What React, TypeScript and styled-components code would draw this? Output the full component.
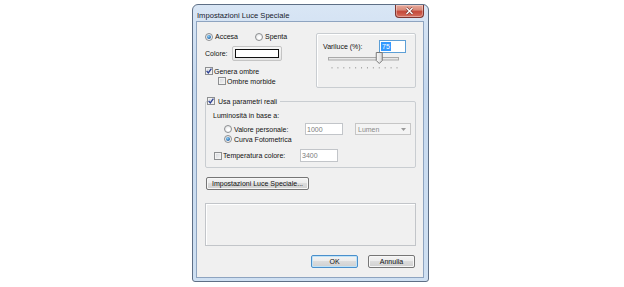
import React from "react";
import styled, { createGlobalStyle } from "styled-components";

const GlobalStyle = createGlobalStyle`
  html, body {
    margin: 0;
    padding: 0;
    background: #ffffff;
  }
  body {
    font-family: "Liberation Sans", Arial, sans-serif;
    font-size: 7px;
    color: #111;
  }
`;

export default function App() {
  return (
    <>
      <GlobalStyle />
      <Page>
        <Window>
          <TitleBar>
            <Title>Impostazioni Luce Speciale</Title>
            <CloseButton>
              <svg width="9" height="8" viewBox="0 0 9 8">
                <path d="M1.5 1 L7.5 7 M7.5 1 L1.5 7" stroke="#7a3a34" strokeWidth="2.6" />
                <path d="M1.5 1 L7.5 7 M7.5 1 L1.5 7" stroke="#ffffff" strokeWidth="1.4" />
              </svg>
            </CloseButton>
          </TitleBar>
          <Client>
            <TopSection>
              <LeftColumn>
                <Row $h={11}>
                  <Option $w={48}>
                    <Radio $checked />
                    <Text>Accesa</Text>
                  </Option>
                  <Option>
                    <Radio />
                    <Text>Spenta</Text>
                  </Option>
                </Row>
                <Row $h={15} $mt={4}>
                  <Text $w={25}>Colore:</Text>
                  <ColorButton>
                    <Swatch />
                  </ColorButton>
                </Row>
                <Row $h={10} $mt={5} $gap={1}>
                  <Check checked />
                  <Text>Genera ombre</Text>
                </Row>
                <Row $h={10} $indent={13} $gap={1}>
                  <Check />
                  <Text>Ombre morbide</Text>
                </Row>
              </LeftColumn>
              <SliderGroup>
                <Row $h={13}>
                  <Text $w={54}>Variluce (%):</Text>
                  <Field $w={27} $h={13} $focused>
                    <Selected>75</Selected>
                  </Field>
                </Row>
                <TrackBar value={75} />
              </SliderGroup>
            </TopSection>

            <GroupBox>
              <Legend>
                <LegendInner>
                  <Check checked />
                  <Text>Usa parametri reali</Text>
                </LegendInner>
              </Legend>
              <GroupBody>
                <Row $h={10}>
                  <Text>Luminosità in base a:</Text>
                </Row>
                <Row $h={12} $mt={3} $indent={11}>
                  <Radio />
                  <Text $w={69}>Valore personale:</Text>
                  <Field $w={38} $h={12} $disabled>1000</Field>
                  <Dropdown>
                    <span>Lumen</span>
                    <svg width="5" height="3" viewBox="0 0 5 3">
                      <path d="M0 0 H5 L2.5 3 Z" fill="#9a9a9a" />
                    </svg>
                  </Dropdown>
                </Row>
                <Row $h={10} $mt={-1} $indent={11}>
                  <Radio $checked />
                  <Text>Curva Fotometrica</Text>
                </Row>
                <Row $h={13} $mt={5} $indent={1} $gap={1}>
                  <Check />
                  <Text $w={76}>Temperatura colore:</Text>
                  <Field $w={38} $h={13} $disabled>3400</Field>
                </Row>
              </GroupBody>
            </GroupBox>

            <PushButton $w={103} $ml={1} $mt={9}>
              Impostazioni Luce Speciale...
            </PushButton>

            <InfoPanel />

            <Footer>
              <PushButton $w={47} $default>
                OK
              </PushButton>
              <PushButton $w={47}>Annulla</PushButton>
            </Footer>
          </Client>
        </Window>
      </Page>
    </>
  );
}

function Check({ checked }: { checked?: boolean }) {
  return (
    <CheckBox>
      {checked && (
        <svg width="6" height="6" viewBox="0 0 6 6">
          <path d="M0.6 2.9 L2.3 4.9 L5.4 0.6" stroke="#2b3f93" strokeWidth="1.3" fill="none" />
        </svg>
      )}
    </CheckBox>
  );
}

function TrackBar({ value }: { value: number }) {
  const ticks = Array.from({ length: 12 }, (_, i) => 7 + (i * 65) / 11);
  const x = 7 + (value / 100) * 65 - 1.5;
  return (
    <SliderArt width="76" height="18" viewBox="0 0 76 18">
      <rect x="3.5" y="5.5" width="70" height="2.5" fill="#e8e8e8" stroke="#a9a9a9" />
      <defs>
        <linearGradient id="thumb" x1="0" y1="0" x2="1" y2="0">
          <stop offset="0" stopColor="#fbfbfb" />
          <stop offset="1" stopColor="#d6d6d6" />
        </linearGradient>
      </defs>
      <path
        d={`M${x - 3} 0.5 H${x + 3} V8.5 L${x} 11.5 L${x - 3} 8.5 Z`}
        fill="url(#thumb)"
        stroke="#787878"
      />
      {ticks.map((t) => (
        <line key={t} x1={t} x2={t} y1="15" y2="16.5" stroke="#a0a0a0" strokeWidth="0.9" />
      ))}
    </SliderArt>
  );
}

const Page = styled.div`
  width: 624px;
  height: 287px;
  box-sizing: border-box;
  padding: 4px 0 0 192px;
`;

const Window = styled.div`
  width: 237px;
  box-sizing: border-box;
  border: 1px solid #5e6f86;
  border-radius: 6px 6px 3px 3px;
  background: linear-gradient(#d9e6f5, #c6d9ef 30%, #cfe0f2);
  padding: 0 4px 3px 3px;
  display: flex;
  flex-direction: column;
`;

const TitleBar = styled.div`
  height: 16px;
  display: flex;
  align-items: flex-start;
  justify-content: space-between;
`;

const Title = styled.div`
  margin: 6px 0 0 1px;
  font-size: 7.6px;
  line-height: 9px;
  color: #17202b;
`;

const CloseButton = styled.div`
  width: 29px;
  height: 13px;
  box-sizing: border-box;
  border: 1px solid #7d3530;
  border-top: none;
  border-radius: 0 0 4px 4px;
  background: linear-gradient(#e9aa9c, #d88a7a 40%, #c4493a 55%, #d6705f);
  box-shadow: inset 0 0 0 1px rgba(255, 255, 255, 0.35);
  display: flex;
  align-items: center;
  justify-content: center;
`;

const Client = styled.div`
  width: 228px;
  box-sizing: border-box;
  border: 1px solid #8ea4c0;
  background: #f0f0f0;
  padding: 9px 7px 9px 8px;
  display: flex;
  flex-direction: column;
`;

const TopSection = styled.div`
  height: 56px;
  display: flex;
  justify-content: space-between;
`;

const LeftColumn = styled.div`
  display: flex;
  flex-direction: column;
`;

const Row = styled.div<{ $h: number; $mt?: number; $indent?: number; $gap?: number }>`
  height: ${(p) => p.$h}px;
  margin-top: ${(p) => p.$mt ?? 0}px;
  padding-left: ${(p) => p.$indent ?? 0}px;
  display: flex;
  align-items: center;
  gap: ${(p) => p.$gap ?? 2}px;
`;

const Option = styled.div<{ $w?: number }>`
  display: flex;
  align-items: center;
  gap: 2px;
  width: ${(p) => (p.$w ? `${p.$w}px` : "auto")};
`;

const Text = styled.span<{ $w?: number }>`
  display: inline-block;
  white-space: nowrap;
  line-height: 9px;
  width: ${(p) => (p.$w ? `${p.$w}px` : "auto")};
  flex-shrink: 0;
`;

const Radio = styled.span<{ $checked?: boolean }>`
  width: 8px;
  height: 8px;
  box-sizing: border-box;
  flex-shrink: 0;
  border-radius: 50%;
  border: 1px solid #8d8f91;
  background: radial-gradient(circle at 60% 65%, #ffffff 20%, #d9dbdd 100%);
  display: flex;
  align-items: center;
  justify-content: center;

  &::after {
    content: "";
    display: ${(p) => (p.$checked ? "block" : "none")};
    width: 4px;
    height: 4px;
    border-radius: 50%;
    background: radial-gradient(circle at 40% 35%, #8fd2f7, #1d5fa6 75%);
  }
`;

const CheckBox = styled.span`
  width: 8px;
  height: 8px;
  box-sizing: border-box;
  flex-shrink: 0;
  border: 1px solid #8d8f91;
  background: linear-gradient(135deg, #d3d6da, #f7f7f7);
  box-shadow: inset 0 0 0 1px #f2f2f2;
  display: flex;
  align-items: center;
  justify-content: center;
`;

const ColorButton = styled.div`
  width: 50px;
  height: 15px;
  box-sizing: border-box;
  border: 1px solid #c4c4c4;
  border-radius: 2px;
  background: linear-gradient(#f6f6f6, #e6e6e6);
  padding: 2px 2px;
  display: flex;
`;

const Swatch = styled.div`
  flex: 1;
  border: 1px solid #111;
  background: #ffffff;
`;

const SliderGroup = styled.div`
  width: 100px;
  height: 55px;
  margin-top: 2px;
  box-sizing: border-box;
  border: 1px solid #c9cdd1;
  border-radius: 2px;
  box-shadow: inset 1px 1px 0 #fff;
  padding: 6px 0 0 6px;
  display: flex;
  flex-direction: column;
`;

const SliderArt = styled.svg`
  display: block;
  margin: -1px 0 0 2px;
`;

const Field = styled.div<{ $w: number; $h: number; $focused?: boolean; $disabled?: boolean }>`
  width: ${(p) => p.$w}px;
  height: ${(p) => p.$h}px;
  box-sizing: border-box;
  flex-shrink: 0;
  border: 1px solid ${(p) => (p.$focused ? "#5d9fd6" : "#c2c5c9")};
  background: #ffffff;
  color: ${(p) => (p.$disabled ? "#7c7c7c" : "#111")};
  padding-left: 1px;
  display: flex;
  align-items: center;
  line-height: 9px;
`;

const Selected = styled.span`
  background: #3399ff;
  color: #ffffff;
  padding: 0 1px;
  line-height: 9px;
`;

const Dropdown = styled.div`
  width: 56px;
  height: 12px;
  margin-left: 10px;
  box-sizing: border-box;
  border: 1px solid #c6c6c6;
  background: #f4f4f4;
  color: #8a8a8a;
  padding: 0 4px 0 2px;
  display: flex;
  align-items: center;
  justify-content: space-between;
  line-height: 9px;
`;

const GroupBox = styled.fieldset`
  margin: 9px 0 0 0;
  padding: 0;
  min-width: 0;
  border: 1px solid #c9cdd1;
  border-radius: 2px;
`;

const Legend = styled.legend`
  margin-left: 1px;
  padding: 0 3px 0 0;
  height: 10px;
`;

const LegendInner = styled.span`
  display: inline-flex;
  align-items: center;
  gap: 3px;
  height: 10px;
`;

const GroupBody = styled.div`
  padding: 4px 0 5px 7px;
  display: flex;
  flex-direction: column;
`;

const PushButton = styled.div<{ $w: number; $ml?: number; $mt?: number; $default?: boolean }>`
  width: ${(p) => p.$w}px;
  height: 13px;
  margin-left: ${(p) => p.$ml ?? 0}px;
  margin-top: ${(p) => p.$mt ?? 0}px;
  box-sizing: border-box;
  border: 1px solid ${(p) => (p.$default ? "#4a8fcb" : "#767676")};
  border-radius: 2px;
  background: linear-gradient(#f3f3f3, #ececec 45%, #dcdcdc 50%, #d0d0d0);
  box-shadow: inset 0 0 0 1px ${(p) => (p.$default ? "#bfe3f8" : "#f7f7f7")};
  display: flex;
  align-items: center;
  justify-content: center;
  line-height: 9px;
  white-space: nowrap;
`;

const InfoPanel = styled.div`
  height: 43px;
  margin-top: 13px;
  box-sizing: border-box;
  border: 1px solid #c2c5c9;
  box-shadow: inset 1px 1px 0 #fff;
`;

const Footer = styled.div`
  margin-top: 9px;
  padding-right: 1px;
  display: flex;
  justify-content: flex-end;
  gap: 10px;
`;
